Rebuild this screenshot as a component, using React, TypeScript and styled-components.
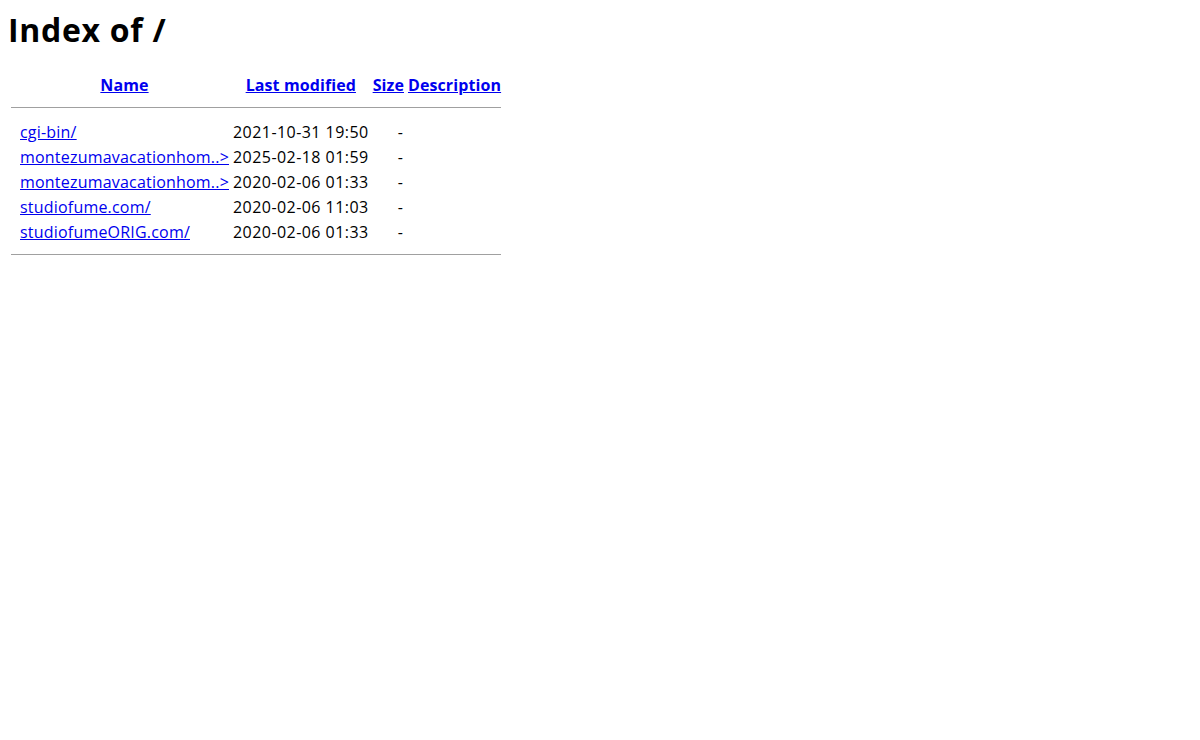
import { createGlobalStyle, styled } from "styled-components";

type Entry = {
  name: string;
  modified: string;
  size: string;
  description: string;
};

const entries: Entry[] = [
  { name: "cgi-bin/", modified: "2021-10-31 19:50", size: "-", description: "" },
  { name: "montezumavacationhom..>", modified: "2025-02-18 01:59", size: "-", description: "" },
  { name: "montezumavacationhom..>", modified: "2020-02-06 01:33", size: "-", description: "" },
  { name: "studiofume.com/", modified: "2020-02-06 11:03", size: "-", description: "" },
  { name: "studiofumeORIG.com/", modified: "2020-02-06 01:33", size: "-", description: "" },
];

const GlobalStyle = createGlobalStyle`
  body {
    margin: 8px;
    background: #fff;
    color: #000;
    font-family: "Open Sans", "Noto Sans CJK SC", sans-serif;
    font-size: 16px;
  }
`;

const Title = styled.h1`
  margin: 0 0 20px;
  font-size: 32px;
  font-weight: 700;
  line-height: 44px;
  letter-spacing: 0.7px;
`;

const Listing = styled.table`
  border-spacing: 2px;
  line-height: 21px;
`;

const HeadCell = styled.th`
  padding: 1px;
  font-weight: 700;
  text-align: center;
  letter-spacing: 0.1px;
`;

const Cell = styled.td<{
  $align?: "left" | "right";
  $spacing?: number;
  $padRight?: number;
}>`
  padding: 1px ${({ $padRight }) => $padRight ?? 1}px 1px 1px;
  text-align: ${({ $align }) => $align ?? "left"};
  letter-spacing: ${({ $spacing }) => $spacing ?? 0.2}px;
  white-space: nowrap;
`;

const IconCell = styled.td`
  width: 5px;
  padding: 1px;
`;

const Link = styled.a`
  color: #0000ee;
  text-decoration: underline;
`;

const Rule = styled.hr<{ $top: number; $bottom: number }>`
  margin: ${({ $top, $bottom }) => `${$top}px 0 ${$bottom}px`};
  border: none;
  border-top: 1px solid #a0a0a0;
  height: 0;
`;

const App = () => {
  return (
    <>
      <GlobalStyle />
      <Title>Index of /</Title>
      <Listing>
        <tbody>
          <tr>
            <HeadCell />
            <HeadCell>
              <Link href="#">Name</Link>
            </HeadCell>
            <HeadCell>
              <Link href="#">Last modified</Link>
            </HeadCell>
            <HeadCell>
              <Link href="#">Size</Link>
            </HeadCell>
            <HeadCell>
              <Link href="#">Description</Link>
            </HeadCell>
          </tr>
          <tr>
            <HeadCell colSpan={5}>
              <Rule $top={7} $bottom={10} />
            </HeadCell>
          </tr>
          {entries.map((entry, i) => (
            <tr key={entry.name + i}>
              <IconCell />
              <Cell>
                <Link href="#">{entry.name}</Link>
              </Cell>
              <Cell $align="right" $spacing={0.45}>
                {entry.modified}
              </Cell>
              <Cell $align="right" $padRight={2}>
                {entry.size}
              </Cell>
              <Cell>{entry.description}&nbsp;</Cell>
            </tr>
          ))}
          <tr>
            <HeadCell colSpan={5}>
              <Rule $top={7} $bottom={8} />
            </HeadCell>
          </tr>
        </tbody>
      </Listing>
    </>
  );
};

export default App;
